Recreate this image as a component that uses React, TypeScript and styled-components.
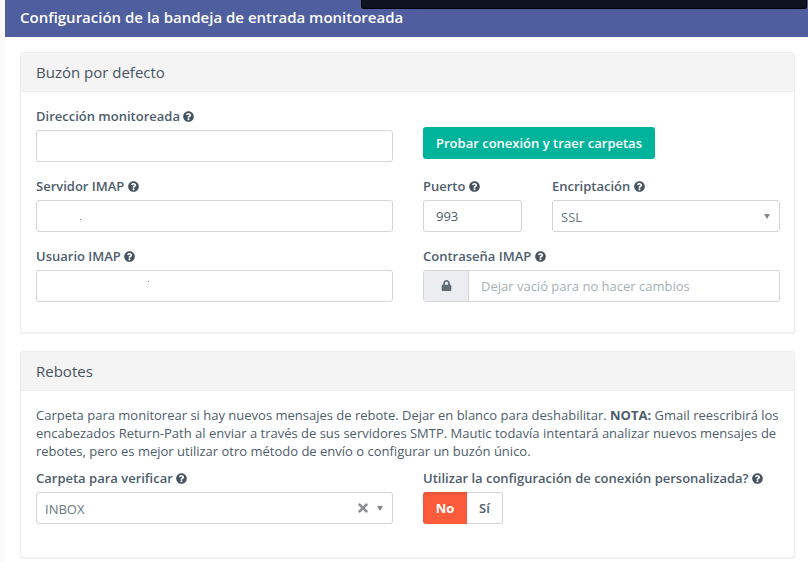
import React from "react";
import styled, { createGlobalStyle } from "styled-components";
import { FaLock, FaQuestionCircle, FaTimes } from "react-icons/fa";

const GlobalStyle = createGlobalStyle`
  html, body {
    margin: 0;
    padding: 0;
    height: 100%;
    overflow: hidden;
    background: #ffffff;
  }
  * {
    box-sizing: border-box;
  }
  body {
    font-family: "Open Sans", "Liberation Sans", sans-serif;
    font-size: 13px;
    color: #4e5d6c;
  }
`;

const Page = styled.div`
  position: relative;
  width: 808px;
  height: 562px;
  padding-left: 5px;
  background: #fafafa;
  overflow: hidden;
`;

const Overlay = styled.div`
  position: absolute;
  top: 0;
  left: 361px;
  width: 446px;
  height: 9px;
  background: #0f1320;
  border-bottom: 1px solid #000000;
  border-left: 1px solid #000000;
  border-right: 1px solid #000000;
  border-radius: 0 0 3px 3px;
`;

const Main = styled.main`
  height: 100%;
  background: #ffffff;
`;

const PageHeader = styled.header`
  height: 37px;
  padding: 7px 15px 0;
  background: #4e5e9e;
  color: #ffffff;
  font-size: 15px;
  font-weight: 600;
  line-height: 20px;
`;

const Content = styled.div`
  display: flex;
  flex-direction: column;
  gap: 18px;
  padding: 15px 13px 0 15px;
`;

const Panel = styled.section<{ $height: number }>`
  height: ${(p) => p.$height}px;
  background: #ffffff;
  border: 1px solid #ebedf0;
  border-radius: 3px;
  box-shadow: 0 1px 1px rgba(0, 0, 0, 0.05);
`;

const PanelHeading = styled.h3`
  margin: 0;
  height: 39px;
  padding: 0 15px;
  background: #f4f4f4;
  border-bottom: 1px solid #ebedf0;
  color: #47535f;
  font-size: 15px;
  font-weight: 500;
  line-height: 38px;
`;

const PanelBody = styled.div`
  padding: 15px;
`;

const Row = styled.div`
  display: grid;
  grid-template-columns: 357px 357px;
  column-gap: 30px;
  margin-bottom: 15px;
`;

const Column = styled.div<{ $end?: boolean }>`
  display: flex;
  flex-direction: column;
  justify-content: ${(p) => (p.$end ? "flex-end" : "flex-start")};
  padding-bottom: ${(p) => (p.$end ? "3px" : "0")};
`;

const SplitColumn = styled.div`
  display: grid;
  grid-template-columns: 99px 228px;
  column-gap: 30px;
`;

const Label = styled.label`
  display: block;
  height: 23px;
  color: #4e5d6c;
  font-size: 13px;
  font-weight: 600;
  line-height: 18px;
  white-space: nowrap;

  svg {
    width: 11px;
    height: 11px;
    margin-left: 0;
    vertical-align: -1px;
    color: #47535f;
  }
`;

const FieldBox = styled.div`
  position: relative;
  height: 32px;
  background: #ffffff;
  border: 1px solid #d5d5d5;
  border-radius: 3px;
`;

const TextInput = styled.input`
  display: block;
  width: 100%;
  height: 100%;
  padding: 0 12px;
  border: 0;
  outline: 0;
  background: transparent;
  color: #4e5d6c;
  font-family: inherit;
  font-size: 13px;

  &::placeholder {
    color: #a7afb7;
    opacity: 1;
  }
`;

const Speck = styled.span<{ $left: number; $top: number }>`
  position: absolute;
  left: ${(p) => p.$left}px;
  top: ${(p) => p.$top}px;
  width: 1px;
  height: 1px;
  background: #4d8fd0;
`;

const GroupBox = styled(FieldBox)`
  display: flex;
`;

const Addon = styled.span`
  display: flex;
  flex: 0 0 45px;
  align-items: center;
  justify-content: center;
  padding-bottom: 2px;
  background: #ebedf0;
  border-right: 1px solid #d5d5d5;
  color: #5f6b77;
  font-size: 11px;
`;

const SelectBox = styled(FieldBox)`
  display: flex;
  align-items: center;
  padding: 0 8px;
  color: #6b7783;
  font-size: 13px;
`;

const SelectValue = styled.span`
  flex: 1;
  padding-top: 2px;
`;

const ClearIcon = styled(FaTimes)`
  width: 14px;
  height: 14px;
  margin-right: 7px;
  color: #8a8f94;
`;

const Caret = styled.span`
  width: 0;
  height: 0;
  margin-right: 1px;
  border-style: solid;
  border-width: 5px 3.5px 0;
  border-color: #888888 transparent transparent;
`;

const PrimaryButton = styled.button`
  align-self: flex-start;
  height: 32px;
  width: 232px;
  padding: 0;
  border: 0;
  border-radius: 3px;
  background: #00b49c;
  color: #ffffff;
  font-family: inherit;
  font-size: 13px;
  font-weight: 600;
  white-space: nowrap;
`;

const Paragraph = styled.p`
  margin: 0 0 9px;
  color: #4e5d6c;
  font-size: 13px;
  line-height: 18px;
`;

const Toggle = styled.div`
  display: flex;
  height: 32px;
`;

const ToggleOption = styled.button<{ $active?: boolean }>`
  height: 32px;
  padding: 0;
  width: ${(p) => (p.$active ? "44px" : "36px")};
  border: ${(p) => (p.$active ? "0" : "1px solid #d5d5d5")};
  border-left: 0;
  border-radius: ${(p) => (p.$active ? "3px 0 0 3px" : "0 3px 3px 0")};
  background: ${(p) => (p.$active ? "#fc5c3c" : "#ffffff")};
  box-shadow: ${(p) => (p.$active ? "inset 0 2px 3px rgba(0,0,0,0.12)" : "none")};
  color: ${(p) => (p.$active ? "#ffffff" : "#4e5d6c")};
  font-family: inherit;
  font-size: 13px;
  font-weight: ${(p) => (p.$active ? 700 : 600)};
`;

const Help = () => <FaQuestionCircle />;

export default function App() {
  return (
    <Page>
      <GlobalStyle />
      <Overlay />
      <Main>
        <PageHeader>Configuración de la bandeja de entrada monitoreada</PageHeader>
        <Content>
          <Panel $height={281}>
            <PanelHeading>Buzón por defecto</PanelHeading>
            <PanelBody>
              <Row>
                <Column>
                  <Label>
                    Dirección monitoreada <Help />
                  </Label>
                  <FieldBox>
                    <TextInput readOnly />
                  </FieldBox>
                </Column>
                <Column $end>
                  <PrimaryButton>Probar conexión y traer carpetas</PrimaryButton>
                </Column>
              </Row>
              <Row>
                <Column>
                  <Label>
                    Servidor IMAP <Help />
                  </Label>
                  <FieldBox>
                    <TextInput readOnly />
                    <Speck $left={43} $top={18} />
                  </FieldBox>
                </Column>
                <SplitColumn>
                  <Column>
                    <Label>
                      Puerto <Help />
                    </Label>
                    <FieldBox>
                      <TextInput readOnly value="993" />
                    </FieldBox>
                  </Column>
                  <Column>
                    <Label>
                      Encriptación <Help />
                    </Label>
                    <SelectBox>
                      <SelectValue>SSL</SelectValue>
                      <Caret />
                    </SelectBox>
                  </Column>
                </SplitColumn>
              </Row>
              <Row>
                <Column>
                  <Label>
                    Usuario IMAP <Help />
                  </Label>
                  <FieldBox>
                    <TextInput readOnly />
                    <Speck $left={111} $top={10} />
                  </FieldBox>
                </Column>
                <Column>
                  <Label>
                    Contraseña IMAP <Help />
                  </Label>
                  <GroupBox>
                    <Addon>
                      <FaLock />
                    </Addon>
                    <TextInput readOnly placeholder="Dejar vació para no hacer cambios" />
                  </GroupBox>
                </Column>
              </Row>
            </PanelBody>
          </Panel>
          <Panel $height={207}>
            <PanelHeading>Rebotes</PanelHeading>
            <PanelBody>
              <Paragraph>
                Carpeta para monitorear si hay nuevos mensajes de rebote. Dejar en blanco para
                deshabilitar. <strong>NOTA:</strong> Gmail reescribirá los encabezados Return-Path
                al enviar a través de sus servidores SMTP. Mautic todavía intentará analizar nuevos
                mensajes de rebotes, pero es mejor utilizar otro método de envío o configurar un
                buzón único.
              </Paragraph>
              <Row>
                <Column>
                  <Label>
                    Carpeta para verificar <Help />
                  </Label>
                  <SelectBox>
                    <SelectValue>INBOX</SelectValue>
                    <ClearIcon />
                    <Caret />
                  </SelectBox>
                </Column>
                <Column>
                  <Label>
                    Utilizar la configuración de conexión personalizada? <Help />
                  </Label>
                  <Toggle>
                    <ToggleOption $active>No</ToggleOption>
                    <ToggleOption>Sí</ToggleOption>
                  </Toggle>
                </Column>
              </Row>
            </PanelBody>
          </Panel>
        </Content>
      </Main>
    </Page>
  );
}
